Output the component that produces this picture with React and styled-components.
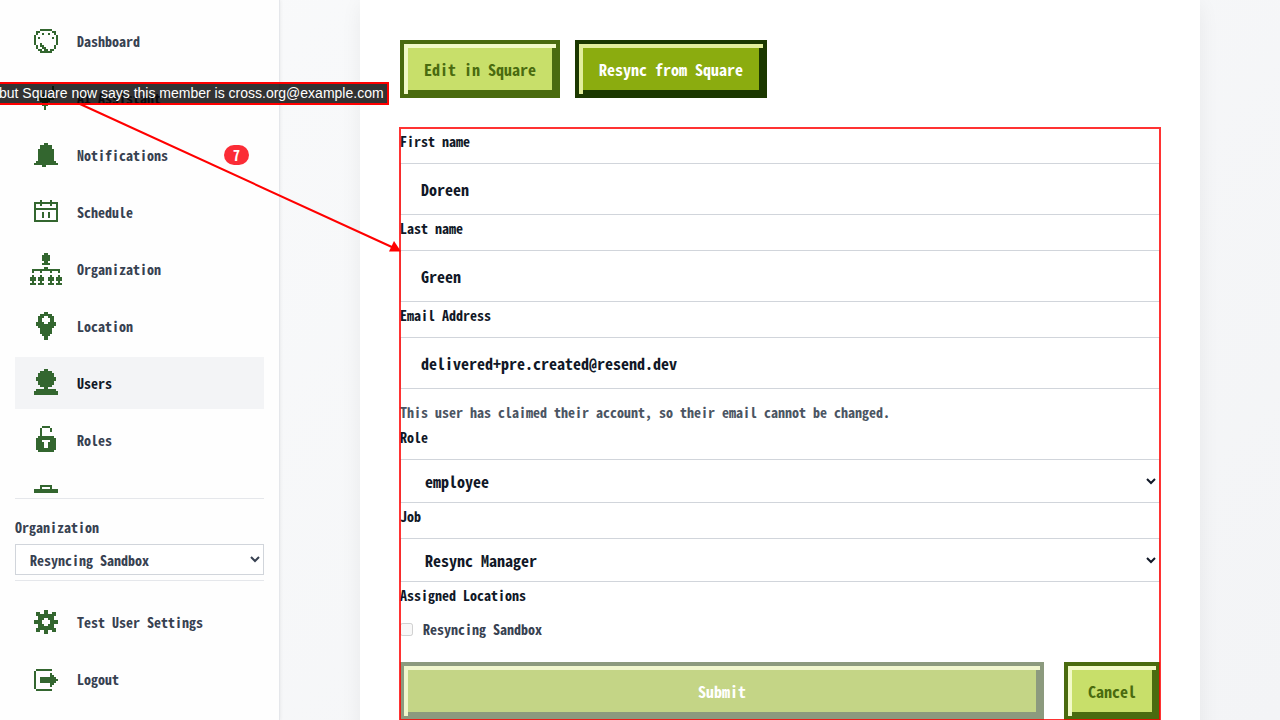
import React, { useId } from 'react'
import styled, { createGlobalStyle, css } from 'styled-components'

const mono = '"Noto Sans Mono CJK JP", "Liberation Mono", monospace'

// each character is one 2px cell of the icon
const icons = {
    dashboard: [
        '...######...',
        '.##......##.',
        '.#..#..#..#.',
        '#..........#',
        '#.#......#.#',
        '#..........#',
        '#..........#',
        '#..#.......#',
        '.#.##.....#.',
        '.#..##....#.',
        '..##.##.##..',
        '...######...',
    ],
    assistant: [
        '.........#..',
        '.........#..',
        '.....#..###.',
        '.....#...#..',
        '....###..#..',
        '....###.....',
        '.#########..',
        '...#####....',
        '....###.....',
        '....###.....',
        '.....#......',
        '.....#......',
    ],
    bell: [
        '.....##.....',
        '...######...',
        '...######...',
        '..########..',
        '..########..',
        '..########..',
        '..########..',
        '..########..',
        '..########..',
        '.##########.',
        '############',
        '....##......',
    ],
    calendar: [
        '...#....#...',
        '############',
        '#..#....#..#',
        '#..........#',
        '############',
        '#..........#',
        '#...#..#...#',
        '#...#..#...#',
        '#...#..#...#',
        '#..........#',
        '############',
        '............',
    ],
    organization: [
        '.......##.......',
        '......####......',
        '......####......',
        '......####......',
        '.......##.......',
        '......####......',
        '................',
        '.......##.......',
        '.##############.',
        '.#...#....#...#.',
        '................',
        '.#...#....#...#.',
        '###.###..###.###',
        '###.###..###.###',
        '.#...#....#...#.',
        '###.###..###.###',
    ],
    location: [
        '....##....',
        '..######..',
        '.###..###.',
        '.##....##.',
        '.##....##.',
        '####..####',
        '##########',
        '.########.',
        '..######..',
        '..######..',
        '..######..',
        '...####...',
        '....##....',
        '....##....',
    ],
    user: [
        '.....##.....',
        '...######...',
        '..########..',
        '..########..',
        '.##########.',
        '.##########.',
        '..########..',
        '..########..',
        '...######...',
        '.....##.....',
        '.##########.',
        '############',
        '############',
        '............',
    ],
    lock: [
        '...####...',
        '..#....#..',
        '..#....#..',
        '..#.......',
        '..#.......',
        '.########.',
        '##########',
        '###....###',
        '####..####',
        '####..####',
        '####..####',
        '##########',
        '.########.',
        '..........',
    ],
    briefcase: [
        '...######...',
        '...#....#...',
        '############',
        '############',
        '############',
        '############',
        '#####..#####',
        '############',
        '############',
        '############',
        '############',
        '############',
    ],
    gear: [
        '.....##.....',
        '.##..##..##.',
        '.##########.',
        '..########..',
        '..###..###..',
        '####....####',
        '####....####',
        '..###..###..',
        '..########..',
        '.##########.',
        '.##..##..##.',
        '.....##.....',
    ],
    logout: [
        '............',
        '.########...',
        '#...........',
        '#.......#...',
        '#.......##..',
        '#..########.',
        '#..#########',
        '#..########.',
        '#.......##..',
        '#.......#...',
        '#...........',
        '.########...',
    ],
}

function PixelIcon({ name }) {
    const rows = icons[name]
    const d = rows
        .map((row, y) => [...row].map((c, x) => (c === '#' ? `M${x} ${y}h1v1h-1z` : '')).join(''))
        .join('')

    return (
        <svg
            width={rows[0].length * 2}
            height={rows.length * 2}
            viewBox={`0 0 ${rows[0].length} ${rows.length}`}
            shapeRendering="crispEdges"
            aria-hidden="true"
        >
            <path d={d} fill="#33662f" />
        </svg>
    )
}

function NavItem({ icon, label, active, badge }) {
    return (
        <NavLink href="#" $active={active}>
            <IconBox>
                <PixelIcon name={icon} />
            </IconBox>
            {label && <span>{label}</span>}
            {badge && <Badge>{badge}</Badge>}
        </NavLink>
    )
}

function TextField({ label, type = 'text', value }) {
    const id = useId()
    return (
        <div>
            <Label htmlFor={id}>{label}</Label>
            <Input id={id} type={type} defaultValue={value} />
        </div>
    )
}

function SelectField({ label, value }) {
    const id = useId()
    return (
        <div>
            <Label htmlFor={id}>{label}</Label>
            <Select id={id}>
                <option>{value}</option>
            </Select>
        </div>
    )
}

function App() {
    return (
        <>
            <GlobalStyle />
            <Page>
                <Sidebar>
                    <Nav>
                        <NavItem icon="dashboard" label="Dashboard" />
                        <NavItem icon="assistant" label="AI Assistant" />
                        <NavItem icon="bell" label="Notifications" badge="7" />
                        <NavItem icon="calendar" label="Schedule" />
                        <NavItem icon="organization" label="Organization" />
                        <NavItem icon="location" label="Location" />
                        <NavItem icon="user" label="Users" active />
                        <NavItem icon="lock" label="Roles" />
                        <NavItem icon="briefcase" />
                    </Nav>
                    <OrgPicker>
                        <label htmlFor="org">Organization</label>
                        <OrgSelect id="org">
                            <option>Resyncing Sandbox</option>
                        </OrgSelect>
                    </OrgPicker>
                    <Footer>
                        <NavItem icon="gear" label="Test User Settings" />
                        <NavItem icon="logout" label="Logout" />
                    </Footer>
                </Sidebar>
                <Main>
                    <Card>
                        <Actions>
                            <LightButton type="button">Edit in Square</LightButton>
                            <DarkButton type="button">Resync from Square</DarkButton>
                        </Actions>
                        <Form>
                            <TextField label="First name" value="Doreen" />
                            <TextField label="Last name" value="Green" />
                            <TextField label="Email Address" type="email" value="delivered+pre.created@resend.dev" />
                            <Hint>This user has claimed their account, so their email cannot be changed.</Hint>
                            <SelectField label="Role" value="employee" />
                            <SelectField label="Job" value="Resync Manager" />
                            <Locations>
                                <legend>Assigned Locations</legend>
                                <CheckLabel>
                                    <input type="checkbox" disabled />
                                    Resyncing Sandbox
                                </CheckLabel>
                            </Locations>
                            <FormButtons>
                                <SubmitButton type="submit" disabled>Submit</SubmitButton>
                                <LightButton type="button">Cancel</LightButton>
                            </FormButtons>
                        </Form>
                    </Card>
                </Main>
            </Page>
            <Arrow width="410" height="260" aria-hidden="true">
                <path d="M80 104L394 248" stroke="#f00" strokeWidth="2" />
                <path d="M401 251.500L389 251.500L394 241z" fill="#f00" />
            </Arrow>
            <Note>but Square now says this member is cross.org@example.com</Note>
        </>
    )
}

export default App

const GlobalStyle = createGlobalStyle`
    * {
        box-sizing: border-box;
    }

    body {
        margin: 0;
        overflow: hidden;
        font-family: ${mono};
        font-size: 14px;
        font-weight: 700;
        line-height: 20px;
        color: #374151;
    }

    button, input, select {
        font-family: inherit;
        font-weight: inherit;
    }
`

const Page = styled.div`
    display: flex;
    height: 100vh;
    background: linear-gradient(135deg, #f9fafb, #f3f4f6);
`

const Sidebar = styled.aside`
    flex: 0 0 280px;
    display: flex;
    flex-direction: column;
    padding: 15px;
    background: #fefefe;
    border-right: 1px solid #e5e7eb;
    box-shadow: 1px 0 3px rgba(0, 0, 0, 0.05);
`

const Nav = styled.nav`
    flex: 1;
    min-height: 0;
    display: flex;
    flex-direction: column;
    gap: 5px;
    overflow: hidden;
    margin-bottom: 5px;
`

const NavLink = styled.a`
    flex: 0 0 52px;
    display: flex;
    align-items: center;
    padding: 0 15px;
    color: ${props => props.$active ? '#111827' : '#374151'};
    background: ${props => props.$active ? '#f3f4f6' : 'transparent'};
    text-decoration: none;
    white-space: nowrap;
`

const IconBox = styled.span`
    flex: 0 0 32px;
    display: flex;
    justify-content: center;
    margin-right: 15px;
`

const Badge = styled.span`
    margin-left: auto;
    padding: 0 9px;
    border-radius: 10px;
    background: #fb2c36;
    color: white;
`

const OrgPicker = styled.div`
    display: flex;
    flex-direction: column;
    gap: 7px;
    padding: 18px 0 5px;
    border-top: 1px solid #e5e7eb;
    border-bottom: 1px solid #e5e7eb;
`

const OrgSelect = styled.select`
    width: 100%;
    height: 31px;
    padding: 0 0 0 10px;
    border: 1px solid #d1d5db;
    border-radius: 0;
    background-color: white;
    color: #374151;
    font-size: 14px;
`

const Footer = styled.div`
    display: flex;
    flex-direction: column;
    gap: 5px;
    padding-top: 15px;
`

const Main = styled.main`
    flex: 1;
    min-width: 0;
    padding: 0 80px;
`

const Card = styled.div`
    min-height: 100vh;
    padding: 40px;
    background: white;
    box-shadow: 0 4px 20px rgba(0, 0, 0, 0.06);
`

const Actions = styled.div`
    display: flex;
    gap: 15px;
    margin-bottom: 30px;
`

const PixelButton = styled.button`
    padding: 13px 20px;
    border: 4px solid;
    border-radius: 0;
    font-size: 16px;
    line-height: 24px;
    cursor: pointer;
`

const LightButton = styled(PixelButton)`
    border-color: #4a6b0f;
    background: #c8df6a;
    box-shadow: inset 4px 4px 0 #f2fac8, inset -4px -4px 0 #4a6b0f;
    color: #4a6b0f;
`

const DarkButton = styled(PixelButton)`
    border-color: #1b3800;
    background: #8bac0f;
    box-shadow: inset 4px 4px 0 #e2ee9c, inset -4px -4px 0 #1b3800;
    color: white;
`

const SubmitButton = styled(DarkButton)`
    flex: 1;
    opacity: 0.5;
`

const Form = styled.form`
    position: relative;

    &::after {
        content: '';
        position: absolute;
        inset: -1px;
        border: 2px solid rgba(255, 0, 0, 0.8);
        pointer-events: none;
    }
`

const labelText = css`
    padding: 3px 0 12px;
    color: #111827;
    font-size: 14px;
    line-height: 20px;
`

const Label = styled.label`
    display: block;
    ${labelText}
`

const control = css`
    display: block;
    width: 100%;
    border: 1px solid #d1d5db;
    border-radius: 0;
    background-color: white;
    color: #111827;
    font-size: 16px;
    outline: none;
`

const Input = styled.input`
    ${control}
    height: 52px;
    padding: 0 20px;
`

const Select = styled.select`
    ${control}
    height: 44px;
    padding: 0 0 0 20px;
`

const Hint = styled.p`
    margin: 0;
    padding: 13px 0 2px;
    color: #4b5563;
`

const Locations = styled.fieldset`
    margin: 0;
    padding: 0;
    border: 0;

    > legend {
        ${labelText}
    }
`

const CheckLabel = styled.label`
    display: flex;
    align-items: center;
    gap: 10px;
    padding: 2px 0 23px;

    > input {
        width: 13px;
        height: 13px;
        margin: 0;
    }
`

const FormButtons = styled.div`
    display: flex;
    gap: 20px;
`

const Arrow = styled.svg`
    position: absolute;
    top: 0;
    left: 0;
    pointer-events: none;
`

// runs off the left edge of the window
const Note = styled.div`
    position: absolute;
    top: 82px;
    left: -6px;
    padding: 2px 3px;
    border: 2px solid #f00;
    background: rgba(0, 0, 0, 0.8);
    color: white;
    font-family: "Liberation Sans", Arial, sans-serif;
    font-size: 14px;
    font-weight: 400;
    line-height: 15px;
    white-space: nowrap;
`
